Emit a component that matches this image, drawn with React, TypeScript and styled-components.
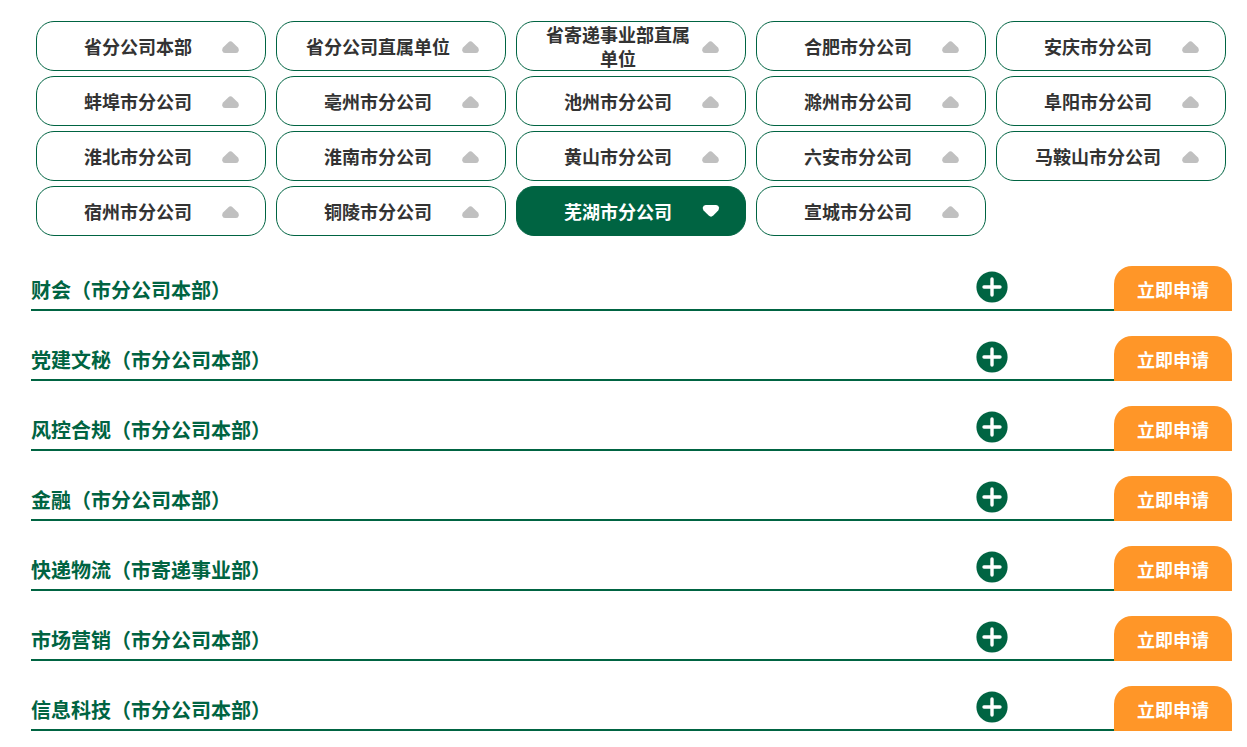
import React, { useState } from 'react';
import styled, { createGlobalStyle } from 'styled-components';

const GREEN = '#006442';
const ORANGE = '#ff9628';

const ARROW_UP = 'M6.2 3.4Q8.5 1.2 10.8 3.4L16 8.5Q17 9.8 16.8 11.5 16.4 14 14 14H3Q.6 14 .2 11.5 0 9.8 1 8.5Z';
const ARROW_DOWN = 'M6.7 11.6Q9 13.8 11.3 11.6L16.2 6.5Q17.2 5.2 17 3.5 16.6 1 14.2 1H3.6Q1.2 1 .8 3.5.6 5.2 1.6 6.5Z';

const GlobalStyle = createGlobalStyle`
  *, *::before, *::after { box-sizing: border-box; }
  body {
    margin: 0;
    background: #fff;
    color: #333;
    font-family: "Microsoft YaHei", "Noto Sans CJK SC", sans-serif;
  }
  button { font-family: inherit; cursor: pointer; }
`;

const Page = styled.main`
  padding: 21px 15px 16px 31px;
`;

const BranchGrid = styled.nav`
  display: grid;
  grid-template-columns: repeat(5, 1fr);
  gap: 5px 10px;
  padding: 0 6px 0 5px;
`;

const BranchButton = styled.button<{ $active: boolean }>`
  display: flex;
  align-items: center;
  justify-content: center;
  gap: 9px;
  height: 50px;
  padding: 0;
  border: 1px solid ${GREEN};
  border-radius: 18px;
  background: ${({ $active }) => ($active ? GREEN : '#fff')};
  color: ${({ $active }) => ($active ? '#fff' : '#333')};
  font-size: 18px;
  font-weight: 700;
  line-height: 24px;
`;

const BranchName = styled.span`
  width: 150px;
  text-align: center;
`;

const Arrow = styled.svg<{ $active: boolean }>`
  flex: none;
  width: 17px;
  height: 14px;
  overflow: visible;
  fill: ${({ $active }) => ($active ? '#fff' : '#c0c0c0')};
`;

const JobList = styled.ul`
  display: grid;
  gap: 25px;
  margin: 30px 0 0;
  padding: 0;
  list-style: none;
`;

const JobRow = styled.li`
  display: flex;
  align-items: center;
  height: 45px;
  border-bottom: 2px solid ${GREEN};
`;

const JobTitle = styled.h2`
  flex: 1;
  margin: 0;
  padding-top: 4px;
  color: ${GREEN};
  font-size: 20px;
  font-weight: 700;
  line-height: 30px;
`;

const ExpandButton = styled.button`
  display: flex;
  margin-right: 106px;
  padding: 0 0 2px;
  border: 0;
  background: none;
`;

const ApplyButton = styled.button`
  align-self: flex-start;
  flex: none;
  width: 118px;
  height: 45px;
  padding: 0;
  border: 0;
  border-radius: 18px 18px 0 0;
  background: ${ORANGE};
  color: #fff;
  font-size: 18px;
  font-weight: 700;
  line-height: 24px;
`;

const branches = [
  '省分公司本部', '省分公司直属单位', '省寄递事业部直属单位', '合肥市分公司', '安庆市分公司',
  '蚌埠市分公司', '亳州市分公司', '池州市分公司', '滁州市分公司', '阜阳市分公司',
  '淮北市分公司', '淮南市分公司', '黄山市分公司', '六安市分公司', '马鞍山市分公司',
  '宿州市分公司', '铜陵市分公司', '芜湖市分公司', '宣城市分公司',
];

const jobs = [
  '财会（市分公司本部）',
  '党建文秘（市分公司本部）',
  '风控合规（市分公司本部）',
  '金融（市分公司本部）',
  '快递物流（市寄递事业部）',
  '市场营销（市分公司本部）',
  '信息科技（市分公司本部）',
];

export default function App() {
  const [selected, setSelected] = useState('芜湖市分公司');
  return (
    <>
      <GlobalStyle />
      <Page>
        <BranchGrid>
          {branches.map((name) => {
            const active = name === selected;
            return (
              <BranchButton key={name} type="button" $active={active} aria-pressed={active} onClick={() => setSelected(name)}>
                <BranchName>{name}</BranchName>
                <Arrow $active={active} viewBox="0 0 17 14" aria-hidden="true">
                  <path d={active ? ARROW_DOWN : ARROW_UP} />
                </Arrow>
              </BranchButton>
            );
          })}
        </BranchGrid>
        <JobList>
          {jobs.map((title) => (
            <JobRow key={title}>
              <JobTitle>{title}</JobTitle>
              <ExpandButton type="button" aria-label={`展开${title}`}>
                <svg width="32" height="32" viewBox="0 0 32 32" aria-hidden="true">
                  <circle cx="16" cy="16" r="15.6" fill={GREEN} />
                  <path d="M16 8v16M8 16h16" stroke="#fff" strokeWidth="3.4" strokeLinecap="round" />
                </svg>
              </ExpandButton>
              <ApplyButton type="button">立即申请</ApplyButton>
            </JobRow>
          ))}
        </JobList>
      </Page>
    </>
  );
}
